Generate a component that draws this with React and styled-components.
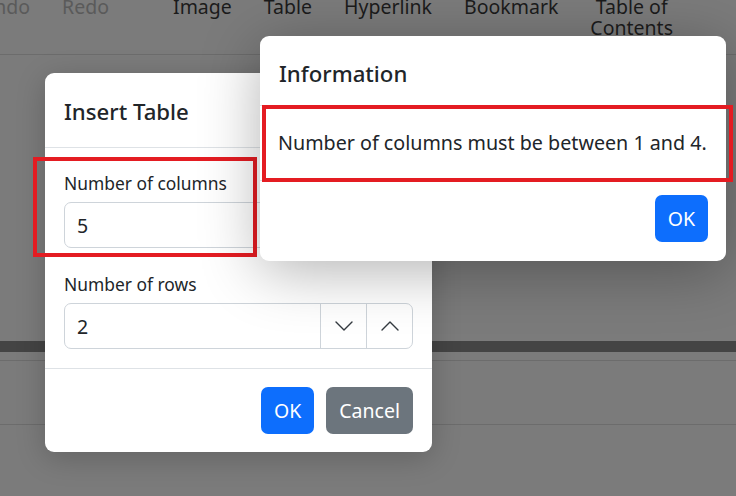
import React from 'react'
import styled, { createGlobalStyle } from 'styled-components'

const GlobalStyle = createGlobalStyle`
    html, body {
        margin: 0;
        padding: 0;
        background: #7b7b7b;
        overflow: hidden;
    }
    * { box-sizing: border-box; }
`

const Page = styled.div`
    position: relative;
    width: 736px;
    height: 496px;
    overflow: hidden;
    background: #7b7b7b;
    font-family: "Noto Sans", "Open Sans", sans-serif;
    color: #212529;
`

const Toolbar = styled.div`
    display: flex;
    align-items: flex-start;
    margin-top: -4px;
    margin-left: -36px;
    height: 59px;
    border-bottom: 1px solid #6c6c6c;
`

const ToolItem = styled.div`
    padding: 0 16px;
    font-size: 19.5px;
    line-height: 21px;
    text-align: center;
    white-space: nowrap;
    color: ${p => (p.disabled ? '#5a5a5a' : '#1b1b1b')};
`

const ToolSep = styled.div`
    width: 1px;
    height: 49px;
    margin: 0 16px;
    background: #6c6c6c;
`

const Band = styled.div`
    height: 11px;
    margin-top: ${p => p.gap}px;
    background: #444;
`

const Rule = styled.div`
    height: 1px;
    margin-top: ${p => p.gap}px;
    background: #6c6c6c;
`

const Modal = styled.div`
    position: absolute;
    left: ${p => p.left}px;
    top: ${p => p.top}px;
    width: ${p => p.width}px;
    background: #fff;
    border-radius: 9px;
    box-shadow: ${p => p.shadow};
    display: flex;
    flex-direction: column;
`

const Header = styled.div`
    display: flex;
    align-items: center;
    height: ${p => p.height}px;
    padding: ${p => p.drop}px 19px 0;
    border-bottom: 1px solid #dee2e6;
`

const Title = styled.h5`
    margin: 0;
    font-size: 22.2px;
    font-weight: 500;
    color: #212529;
`

const Body = styled.div`
    padding: ${p => p.pad};
    display: flex;
    flex-direction: column;
`

const Message = styled.p`
    margin: 0;
    font-size: 19.7px;
    line-height: 28px;
    color: #212529;
`

const Field = styled.div`
    display: flex;
    flex-direction: column;
    & + & {
        margin-top: 24px;
    }
`

const Label = styled.label`
    font-size: 17.4px;
    line-height: 25px;
    margin-bottom: 6px;
    color: #212529;
`

const InputGroup = styled.div`
    display: flex;
    height: 46px;
    border: 1px solid #ced4da;
    border-radius: 7px;
    overflow: hidden;
`

const Value = styled.div`
    flex: 1;
    display: flex;
    align-items: center;
    padding: 0 12px;
    font-size: 19.5px;
`

const Spin = styled.div`
    width: 46px;
    display: flex;
    align-items: center;
    justify-content: center;
    border-left: 1px solid #ced4da;
`

const Footer = styled.div`
    display: flex;
    justify-content: flex-end;
    gap: 12px;
    padding: ${p => p.pad};
    border-top: 1px solid #dee2e6;
`

const Button = styled.button`
    height: 47px;
    padding: 0 13px;
    border: none;
    border-radius: 7px;
    font-family: inherit;
    font-size: 19.5px;
    color: #fff;
    background: ${p => (p.secondary ? '#6c757d' : '#0d6efd')};
`

const Highlight = styled.div`
    position: absolute;
    left: ${p => p.left}px;
    top: ${p => p.top}px;
    width: ${p => p.width}px;
    height: ${p => p.height}px;
    border: 4px solid #e41c22;
    pointer-events: none;
`

function Chevron({ up }) {
    return (
        <svg width="18" height="10" viewBox="0 0 18 10" fill="none">
            <polyline
                points={up ? '1,9 9,1 17,9' : '1,1 9,9 17,1'}
                stroke="#343a40"
                strokeWidth="1.4"
                strokeLinecap="round"
                strokeLinejoin="round"
            />
        </svg>
    )
}

function NumberField({ label, value }) {
    return (
        <Field>
            <Label>{label}</Label>
            <InputGroup>
                <Value>{value}</Value>
                <Spin><Chevron /></Spin>
                <Spin><Chevron up /></Spin>
            </InputGroup>
        </Field>
    )
}

export default function App() {
    return (
        <Page>
            <GlobalStyle />
            <Toolbar>
                <ToolItem disabled>Undo</ToolItem>
                <ToolItem disabled>Redo</ToolItem>
                <ToolSep />
                <ToolItem>Image</ToolItem>
                <ToolItem>Table</ToolItem>
                <ToolItem>Hyperlink</ToolItem>
                <ToolItem>Bookmark</ToolItem>
                <ToolItem>Table of<br />Contents</ToolItem>
                <ToolSep />
                <ToolItem>Find</ToolItem>
            </Toolbar>
            <Band gap={286} />
            <Rule gap={8} />
            <Rule gap={63} />

            <Modal left={45} top={73} width={387} shadow="0 6px 30px rgba(0,0,0,0.2)">
                <Header height={75} drop={3}>
                    <Title>Insert Table</Title>
                </Header>
                <Body pad="23px 19px 19px">
                    <NumberField label="Number of columns" value="5" />
                    <NumberField label="Number of rows" value="2" />
                </Body>
                <Footer pad="18px 19px 18px">
                    <Button>OK</Button>
                    <Button secondary>Cancel</Button>
                </Footer>
            </Modal>
            <Highlight left={33} top={157} width={224} height={100} />

            <Modal left={260} top={36} width={466} shadow="0 10px 60px rgba(0,0,0,0.3)">
                <Header height={70} drop={6}>
                    <Title>Information</Title>
                </Header>
                <Body pad="23px 18px 23px">
                    <Message>Number of columns must be between 1 and 4.</Message>
                </Body>
                <Footer pad="14px 18px 19px">
                    <Button>OK</Button>
                </Footer>
            </Modal>
            <Highlight left={262} top={105} width={471} height={77} />
        </Page>
    )
}
